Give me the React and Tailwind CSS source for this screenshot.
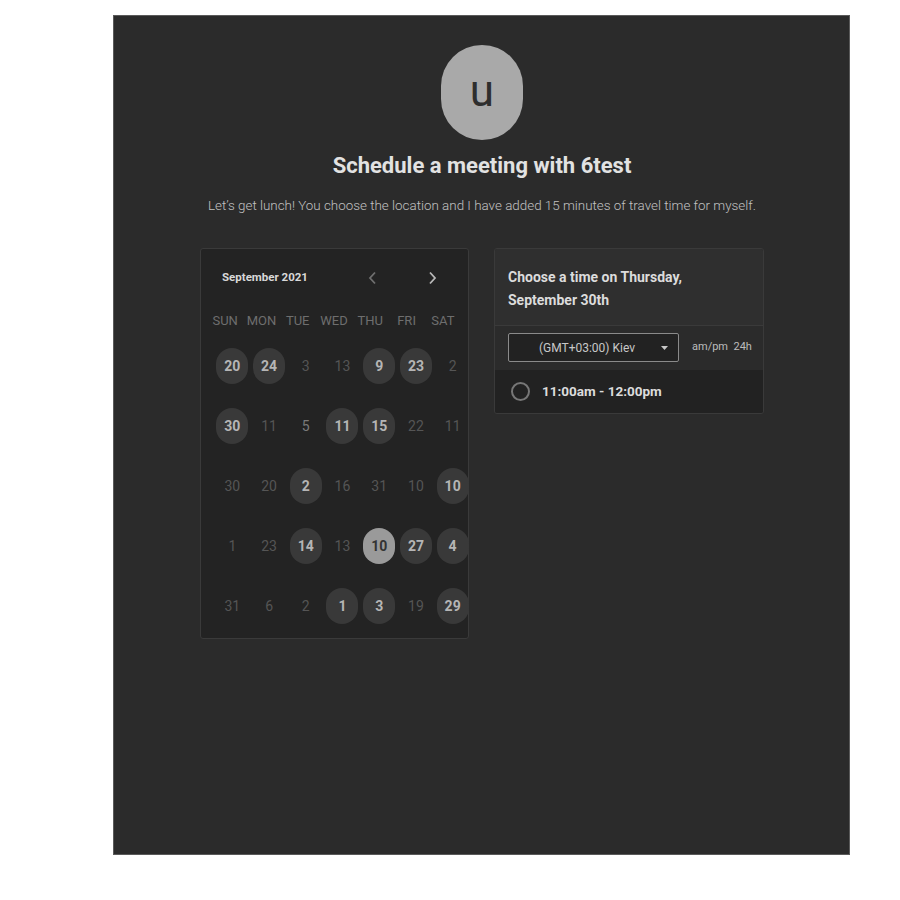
const font = { fontFamily: 'Roboto, "Liberation Sans", sans-serif' };

const weeks = [
  [['20', 'f'], ['24', 'f'], ['3'], ['13'], ['9', 'f'], ['23', 'f'], ['2']],
  [['30', 'f'], ['11'], ['5', 'l'], ['11', 'f'], ['15', 'f'], ['22'], ['11']],
  [['30'], ['20'], ['2', 'f'], ['16'], ['31'], ['10'], ['10', 'f']],
  [['1'], ['23'], ['14', 'f'], ['13'], ['10', 's'], ['27', 'f'], ['4', 'f']],
  [['31'], ['6'], ['2'], ['1', 'f'], ['3', 'f'], ['19'], ['29', 'f']],
];

const dayNames = ['SUN', 'MON', 'TUE', 'WED', 'THU', 'FRI', 'SAT'];

function Day({ label, kind }) {
  if (kind === 's') {
    return (
      <div className="w-[32px] h-[36px] rounded-full bg-[#9a9a9a] flex items-center justify-center text-[14px] font-bold text-[#333]">
        {label}
      </div>
    );
  }
  if (kind === 'f') {
    return (
      <div className="w-[32px] h-[36px] rounded-full bg-[#393939] flex items-center justify-center text-[14px] font-bold text-[#b5b5b5]">
        {label}
      </div>
    );
  }
  return (
    <div className={`w-[32px] h-[36px] flex items-center justify-center text-[14px] ${kind === 'l' ? 'text-[#7a7a7a]' : 'text-[#555]'}`}>
      {label}
    </div>
  );
}

function Calendar() {
  return (
    <div className="w-[269px] h-[391px] bg-[#232323] border border-[#3a3a3a] rounded-[3px] pt-[21px]">
      <div className="flex items-center h-[16px] pl-[21px]">
        <div className="w-[139px] text-[11.5px] font-bold text-[#d8d8d8]">September 2021</div>
        <div className="w-[22px] flex justify-center">
          <svg width="9" height="14" viewBox="0 0 9 14" fill="none">
            <polyline points="7,1.5 2,7 7,12.5" stroke="#6f6f6f" strokeWidth="1.8" />
          </svg>
        </div>
        <div className="w-[22px] ml-[38px] flex justify-center">
          <svg width="9" height="14" viewBox="0 0 9 14" fill="none">
            <polyline points="2,1.5 7,7 2,12.5" stroke="#b8b8b8" strokeWidth="1.8" />
          </svg>
        </div>
      </div>
      <div className="grid grid-cols-7 w-[254px] ml-[6px] mt-[27px]">
        {dayNames.map((d) => (
          <div key={d} className="text-center text-[13px] leading-[16px] text-[#6e6e6e]">{d}</div>
        ))}
      </div>
      <div className="w-[257px] ml-[13px] mt-[7px]">
        {weeks.map((w, i) => (
          <div key={i} className="grid grid-cols-7 h-[60px] items-center">
            {w.map(([label, kind], j) => (
              <div key={j} className="flex justify-center">
                <Day label={label} kind={kind} />
              </div>
            ))}
          </div>
        ))}
      </div>
    </div>
  );
}

function TimePanel() {
  return (
    <div className="w-[270px] border border-[#3a3a3a] rounded-[3px] overflow-hidden">
      <div className="bg-[#2f2f2f] pl-[13px] pt-[17px] pb-[13px] border-b border-[#3a3a3a]">
        <div className="text-[14px] leading-[23px] font-bold text-[#dcdcdc]">
          Choose a time on Thursday,
          <br />
          September 30th
        </div>
      </div>
      <div className="flex items-center pl-[13px] pt-[7px] pb-[8px] bg-[#2b2b2b]">
        <div className="w-[171px] h-[29px] border border-[#8a8a8a] rounded-[2px] bg-[#222] flex items-center relative">
          <span className="w-full text-center text-[12px] text-[#c8c8c8] pr-[13px]">(GMT+03:00) Kiev</span>
          <svg className="absolute right-[10px] top-[12px]" width="7" height="4" viewBox="0 0 7 4">
            <polygon points="0,0 7,0 3.5,4" fill="#c8c8c8" />
          </svg>
        </div>
        <div className="ml-[13px] text-[11px] text-[#bcbcbc] whitespace-pre">am/pm  24h</div>
      </div>
      <div className="h-[43px] bg-[#222] flex items-center pl-[16px]">
        <div className="w-[19px] h-[19px] rounded-full border-2 border-[#777]"></div>
        <div className="ml-[12px] text-[13.5px] font-bold text-[#dcdcdc]">11:00am - 12:00pm</div>
      </div>
    </div>
  );
}

export default function App() {
  return (
    <div className="min-h-screen bg-white pt-[15px] pl-[113px]" style={font}>
      <div className="w-[737px] h-[840px] bg-[#2b2b2b] border border-[#5a5a5a] flex flex-col items-center pt-[29px] pl-[1px]">
        <div className="w-[82px] h-[95px] rounded-full bg-[#a9a9a9] flex items-center justify-center">
          <span className="text-[44px] leading-none text-[#2e2e2e] -mt-[4px]">u</span>
        </div>
        <h1 className="mt-[13px] text-[22px] leading-[26px] font-bold text-[#e2e2e2]">Schedule a meeting with 6test</h1>
        <p className="mt-[17px] text-[13.4px] leading-[20px] font-light text-[#c2c2c2]">
          Let’s get lunch! You choose the location and I have added 15 minutes of travel time for myself.
        </p>
        <div className="flex items-start gap-[25px] mt-[32px]">
          <Calendar />
          <TimePanel />
        </div>
      </div>
    </div>
  );
}
